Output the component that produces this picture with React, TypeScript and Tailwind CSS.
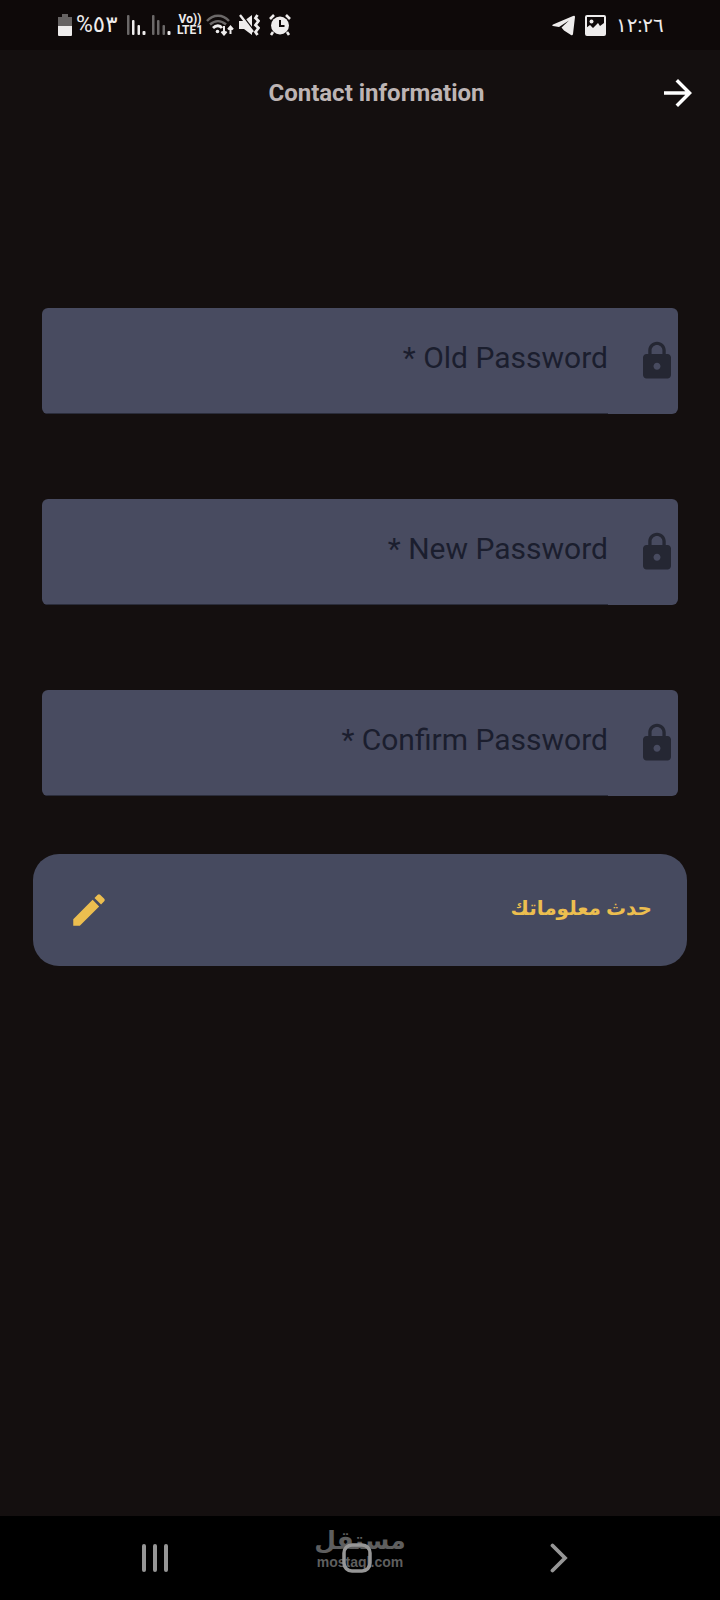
import { useState } from "react";
import type { FormEvent } from "react";
import { MdArrowForward, MdEdit, MdLock } from "react-icons/md";

const fields = [
  { name: "oldPassword", label: "* Old Password" },
  { name: "newPassword", label: "* New Password" },
  { name: "confirmPassword", label: "* Confirm Password" },
];

function SignalBars({ weak = false }: { weak?: boolean }) {
  const on = "#eeecec";
  const off = "#6b6868";
  return (
    <svg width="19" height="21" viewBox="0 0 19 21" aria-hidden="true">
      <rect x="0" y="0" width="2.500" height="20" rx="1" fill={off} />
      <rect x="5" y="5" width="2.500" height="15" rx="1" fill={weak ? off : on} />
      <rect x="10.500" y="10" width="2.500" height="10" rx="1" fill={weak ? off : on} />
      <rect x="15.500" y="16" width="3" height="4" rx="1" fill={on} />
    </svg>
  );
}

function StatusBar() {
  return (
    <div className="flex h-[50px] items-center bg-[#0e0909] px-[58px] text-[#eeecec]">
      <svg width="14" height="22" viewBox="0 0 14 22" aria-hidden="true">
        <path d="M4 0h6v3h4v9H0V3h4z" fill="#666363" />
        <path d="M0 12h14v9a1 1 0 0 1-1 1H1a1 1 0 0 1-1-1z" fill="#eeecec" />
      </svg>
      <span className="ml-1 w-[43px] whitespace-nowrap text-[23px] leading-6">%٥٣</span>
      <div className="ml-2 flex items-center gap-1.5">
        <SignalBars />
        <SignalBars weak />
      </div>
      <div className="ml-[5px] flex w-[28px] flex-col items-center text-[12px] font-bold leading-[11px]">
        <span className="whitespace-nowrap">Vo))</span>
        <span>LTE1</span>
      </div>
      <svg className="ml-[2px]" width="28" height="22" viewBox="0 0 28 22" fill="none" aria-hidden="true">
        <path d="M1 7C7 0 17 0 23 7" stroke="#6b6868" strokeWidth="2.4" />
        <path d="M4 10.500c5-4.500 11-4.500 16 0" stroke="#6b6868" strokeWidth="2.4" />
        <path d="M7 14c3-3 7-3 9 0" stroke="#eeecec" strokeWidth="2.8" />
        <circle cx="11.500" cy="17.500" r="1.800" fill="#eeecec" />
        <path d="M18 12v8M15.500 17.500L18 20.500l2.500-3M24.500 20v-7M22 15.500l2.500-3 2.500 3" stroke="#eeecec" strokeWidth="2" />
      </svg>
      <svg className="ml-[5px]" width="21" height="22" viewBox="0 0 21 22" aria-hidden="true">
        <path d="M0 7h5l8-6v20l-8-6H0z" fill="#eeecec" />
        <path d="M2 0l13 17" stroke="#0e0909" strokeWidth="2" />
        <path d="M1 1l13 17" stroke="#eeecec" strokeWidth="2.400" />
        <path d="M18.500 1l-2 3 3 3-3 4 3 3-3 4 2 3" fill="none" stroke="#eeecec" strokeWidth="2.800" />
      </svg>
      <svg className="ml-[9px]" width="22" height="22" viewBox="0 0 22 22" aria-hidden="true">
        <circle cx="11" cy="11.500" r="9" fill="#eeecec" />
        <path d="M1 5l4-4M21 5l-4-4M4 18l-2 3M18 18l2 3" stroke="#eeecec" strokeWidth="2.600" />
        <path d="M11 6v6h4.500" fill="none" stroke="#0e0909" strokeWidth="2" />
      </svg>
      <svg className="ml-auto" width="24" height="21" viewBox="0 0 24 21" aria-hidden="true">
        <path d="M1 9.500L21 1q2-.800 2 1L21 19q-.400 2-2 1l-7-4.500-2.500-3L17 5.500 7 12 1 11q-1.500-.500 0-1.500z" fill="#eeecec" />
      </svg>
      <svg className="ml-[9px]" width="21" height="21" viewBox="0 0 21 21" aria-hidden="true">
        <rect x="1" y="1" width="19" height="19" rx="1" fill="none" stroke="#eeecec" strokeWidth="2" />
        <circle cx="6.500" cy="6.500" r="2" fill="#eeecec" />
        <path d="M1 13l4-3 3 3 5-5 2 3 4-3v12H1z" fill="#eeecec" />
      </svg>
      <span className="ml-[10px] w-[46px] whitespace-nowrap text-[20px] leading-6">١٢:٢٦</span>
    </div>
  );
}

function NavBar() {
  return (
    <nav className="relative grid h-[84px] grid-cols-3 items-center bg-black pl-[54px] pr-[60px] text-[#969696]">
      {/* site mark sits behind the home button */}
      <div className="absolute inset-x-0 top-[11px] flex flex-col items-center text-[#5e5e5e]">
        <span dir="rtl" className="text-[25px] font-bold leading-7">مستقل</span>
        <span className="font-['Liberation_Sans',sans-serif] text-[14px] font-bold leading-[14px]">mostaql.com</span>
      </div>
      <button type="button" aria-label="Recent apps" className="justify-self-center">
        <svg width="28" height="30" viewBox="0 0 28 30" stroke="currentColor" strokeWidth="4" strokeLinecap="round">
          <path d="M3 3v24M14 3v24M25 3v24" />
        </svg>
      </button>
      <button type="button" aria-label="Home" className="relative justify-self-center">
        <svg width="30" height="30" viewBox="0 0 30 30" fill="none" stroke="currentColor" strokeWidth="3.500">
          <rect x="2" y="2" width="26" height="26" rx="8" />
        </svg>
      </button>
      <button type="button" aria-label="Back" className="justify-self-center">
        <svg width="18" height="30" viewBox="0 0 18 30" fill="none" stroke="currentColor" strokeWidth="3.800" strokeLinecap="round">
          <path d="M2.500 2.500L15 15 2.500 27.500" />
        </svg>
      </button>
    </nav>
  );
}

export default function App() {
  const [values, setValues] = useState<Record<string, string>>({});

  function handleSubmit(e: FormEvent) {
    e.preventDefault();
  }

  return (
    <div className="flex min-h-screen flex-col bg-[#140f0f] font-[Roboto,'Noto_Sans','DejaVu_Sans',sans-serif]">
      <StatusBar />
      <header className="flex h-[85px] items-center pl-24 pr-[21px]">
        <h1 className="flex-1 text-center text-[24px] font-bold leading-8 text-[#bdb4b4]">
          Contact information
        </h1>
        <button type="button" aria-label="Back" className="text-white">
          <MdArrowForward size={42} />
        </button>
      </header>

      <form onSubmit={handleSubmit} className="flex-1 px-[33px] pt-[173px]">
        <div className="flex flex-col gap-[85px] px-[9px]">
          {fields.map((f) => (
            <div key={f.name} className="flex h-[106px] overflow-hidden rounded-md bg-[#484b60]">
              <input
                id={f.name}
                type="password"
                aria-label={f.label}
                placeholder={f.label}
                value={values[f.name] ?? ""}
                onChange={(e) => setValues({ ...values, [f.name]: e.target.value })}
                className="min-w-0 flex-1 border-b border-[#2b2d3b] bg-transparent pb-1.5 text-right text-[30px] text-[#1b1e2e] outline-none placeholder:text-[#1b1e2e]"
              />
              <label htmlFor={f.name} className="flex w-[70px] items-center justify-end text-[#252733]">
                <MdLock size={42} />
              </label>
            </div>
          ))}
        </div>

        <button
          type="submit"
          className="mt-[58px] flex h-[112px] w-full items-center justify-between rounded-[26px] bg-[#464a5f] px-[35px] text-[#ecbe4f]"
        >
          <MdEdit size={42} />
          <span dir="rtl" className="pb-1 text-[20px] font-bold leading-8">حدث معلوماتك</span>
        </button>
      </form>
      <NavBar />
    </div>
  );
}
